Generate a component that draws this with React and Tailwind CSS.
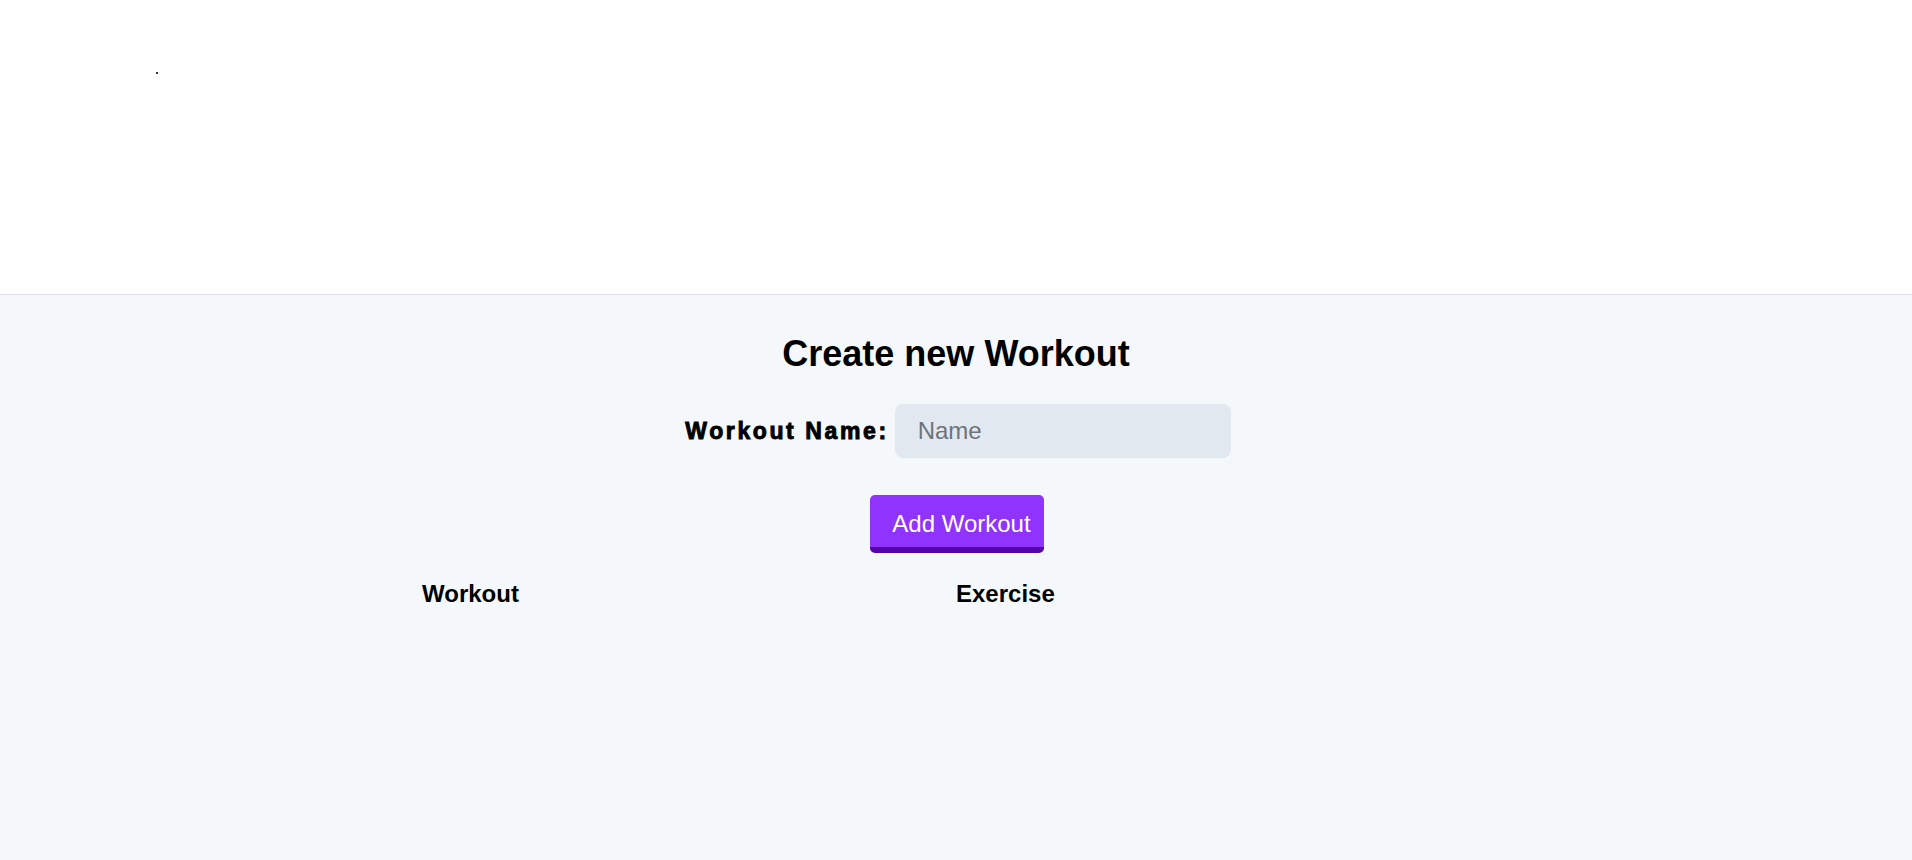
import { useState } from "react";

const App = () => {
  const [name, setName] = useState("");
  const workouts = [];

  return (
    <div className="min-h-screen flex flex-col font-['Liberation_Sans',Arial,sans-serif] text-black">
      {/* Top bar */}
      <header className="h-[295px] shrink-0 bg-white border-b border-[#dce1e7] pt-[72px] pl-[156px]">
        <div className="w-[2px] h-[2px] bg-[#333]" />
      </header>

      {/* Form */}
      <main className="flex-1 bg-[#f5f8fb] flex flex-col items-center">
        <h1 className="mt-[38px] text-[36px] leading-[42px] font-bold">Create new Workout</h1>

        <div className="mt-[29px] ml-[4px] flex items-center gap-[6px]">
          <label className="text-[23px] font-bold tracking-[2.6px] [-webkit-text-stroke:0.9px_black]">
            Workout Name:
          </label>
          <input
            value={name}
            onChange={(e) => setName(e.target.value)}
            placeholder="Name"
            className="w-[336px] h-[54px] rounded-[8px] bg-[#e2e8f0] pl-[23px] text-[24px] outline-none placeholder:text-[#6e737b]"
          />
        </div>

        <button className="mt-[37px] ml-[2px] bg-[#9033fc] text-white text-[24px] leading-[28px] pl-[22px] pr-[13px] pt-[15px] pb-[9px] rounded-[5px] border-b-[6px] border-[#5606a6]">
          Add Workout
        </button>

        {/* Workout list */}
        <table className="mt-[27px] w-[1068px] table-fixed">
          <thead>
            <tr>
              <th className="text-left text-[24px] leading-[28px] font-bold">Workout</th>
              <th className="text-left text-[24px] leading-[28px] font-bold">Exercise</th>
            </tr>
          </thead>
          <tbody>
            {workouts.map((w, i) => (
              <tr key={i}>
                <td>{w.name}</td>
                <td>{w.exercise}</td>
              </tr>
            ))}
          </tbody>
        </table>
      </main>
    </div>
  );
};

export default App;
